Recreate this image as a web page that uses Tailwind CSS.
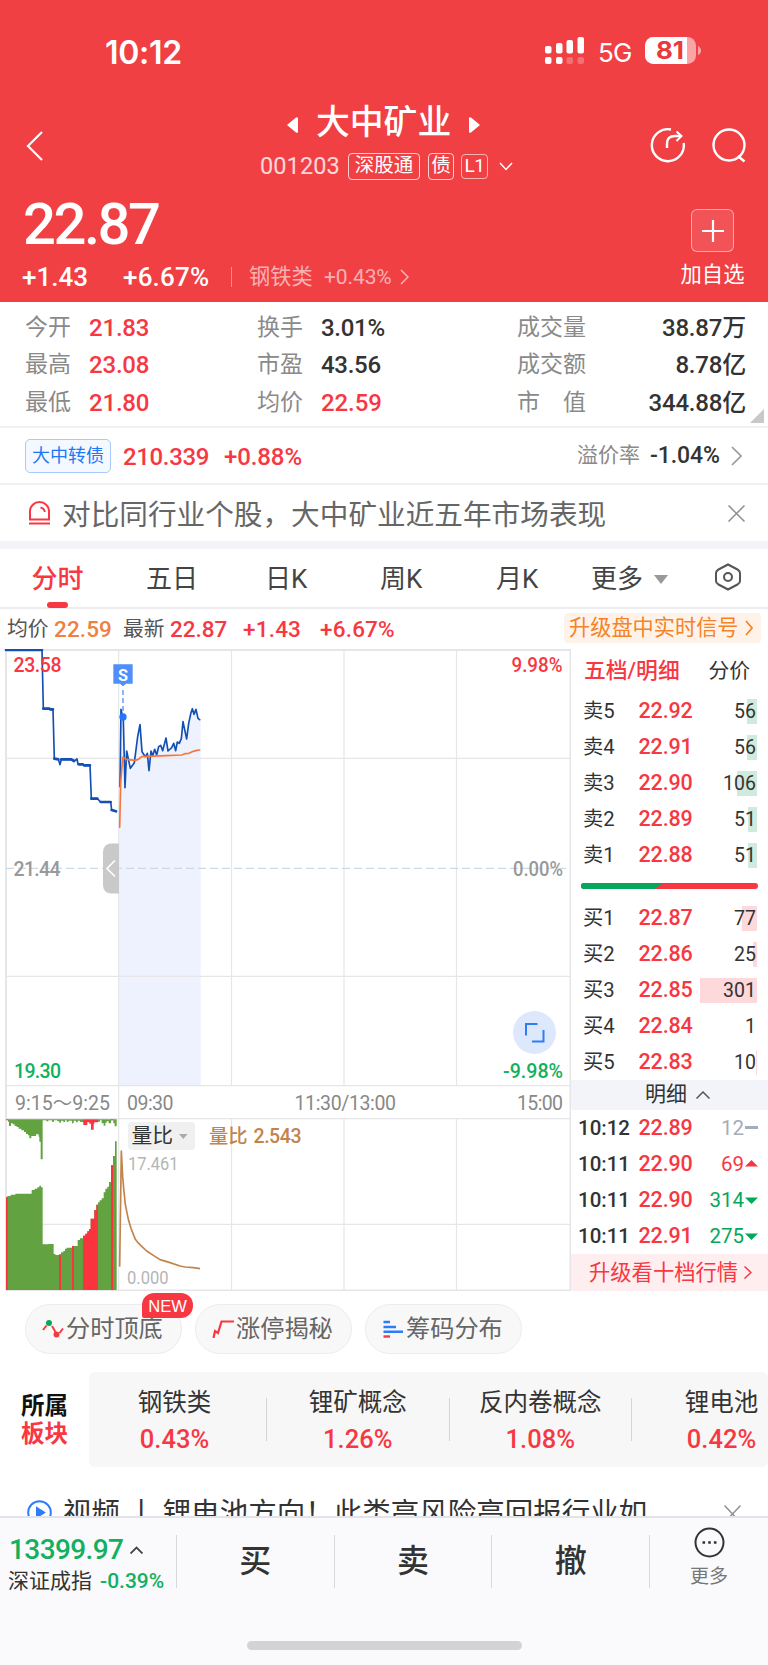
<!DOCTYPE html>
<html lang="zh-CN">
<head>
<meta charset="utf-8">
<title>大中矿业 001203</title>
<script src="https://cdn.jsdelivr.net/npm/@tailwindcss/browser@4"></script>
</head>
<body class="w-[768px] h-[1665px] overflow-hidden bg-white font-[Roboto,'Noto_Sans_CJK_SC',sans-serif] text-[#333] whitespace-nowrap">
<div class="flex flex-col h-[1665px] overflow-hidden">

<!-- header -->
<header class="h-[302px] shrink-0 bg-[#f04043] text-white flex flex-col">
  <div class="h-[105px] flex items-center pl-[105px] pr-[67px] justify-between">
    <span class="font-[Inter,sans-serif] font-semibold text-[32px] tracking-[-0.300px] leading-none">10:12</span>
    <div class="flex items-center -mt-1">
      <svg width="39" height="27" viewBox="0 0 39 27" fill="#fff"><rect x="0" y="9" width="6.5" height="7.500" rx="2"/><rect x="11" y="6" width="6.500" height="10.500" rx="2"/><rect x="21.500" y="3" width="6.500" height="13.500" rx="2"/><rect x="32.500" y="0" width="6.500" height="16.500" rx="2"/><rect x="0" y="20" width="6.500" height="7" rx="2"/><rect x="11" y="20" width="6.500" height="7" rx="2"/><rect x="21.500" y="20" width="6.500" height="7" rx="2" opacity=".25"/><rect x="32.500" y="20" width="6.500" height="7" rx="2" opacity=".25"/></svg>
      <span class="ml-3.5 w-[33px] font-[Inter,sans-serif] text-[26px] tracking-[-0.8px] leading-none mt-1">5G</span>
      <svg class="ml-3.5" width="56" height="27" viewBox="0 0 56 27"><rect width="51" height="27" rx="8.500" fill="#f9a4a6"/><path d="M8.500 0H42V27H8.500A8.500 8.500 0 0 1 0 18.500V8.500A8.500 8.500 0 0 1 8.500 0Z" fill="#fff"/><path d="M53 9q3 1.500 3 4.500t-3 4.500z" fill="#f9a4a6"/><text x="11" y="22.200" textLength="28" lengthAdjust="spacingAndGlyphs" font-family="Inter" font-weight="700" font-size="24" fill="#e8393d">81</text></svg>
    </div>
  </div>
  <div class="h-[82px] flex items-center pl-[26px] pr-[22px]">
    <svg class="w-[17px]" width="17" height="30" viewBox="0 0 17 30" fill="none" stroke="#fff" stroke-width="2.200"><path d="M16 1 2 15l14 14"/></svg>
    <div class="flex-1 pl-[208px] -mt-[5px] flex flex-col">
      <div class="flex items-center h-9 pl-9">
        <svg width="11" height="16" viewBox="0 0 11 16" fill="#fff"><path d="M0 8 9 .5q2-1 2 1v13q0 2-2 1z"/></svg>
        <span class="ml-[18px] -mt-1 w-[135px] text-[33.800px] leading-9 font-medium">大中矿业</span>
        <svg class="ml-[18px]" width="11" height="16" viewBox="0 0 11 16" fill="#fff"><path d="M11 8 2 .5Q0-.5 0 1.500v13q0 2 2 1z"/></svg>
      </div>
      <div class="flex items-center h-7 mt-2.5 pl-[9px]">
        <span class="w-[88px] text-[23.500px] tracking-[0.100px] text-white/80">001203</span>
        <span class="w-[72px] h-[27px] border border-white/75 rounded-[4px] flex items-center justify-center text-[19.500px] leading-none pb-0.5">深股通</span>
        <span class="ml-2 w-[26px] h-[27px] border border-white/75 rounded-[4px] flex items-center justify-center text-[19.500px] leading-none pb-0.5">债</span>
        <span class="ml-[7px] w-[27px] h-[25px] border border-white/60 rounded-[4px] flex items-center justify-center text-[19px] leading-none tracking-tight pb-0.5">L1</span>
        <svg class="ml-[11px]" width="14" height="9" viewBox="0 0 14 9" fill="none" stroke="#fff" stroke-width="1.500"><path d="m1 1 6 6.500L13 1"/></svg>
      </div>
    </div>
    <svg class="-mt-0.5" width="36" height="36" viewBox="0 0 36 36" fill="none" stroke="#fff" stroke-width="2.400"><path d="M21 2.500A16 16 0 1 0 33.700 16"/><path d="M17 21v-4q0-8 8-8h6"/><path d="M26.500 4.500 31.500 9l-5 5" stroke-width="2"/></svg>
    <svg class="ml-[26px] -mt-0.5" width="34" height="36" viewBox="0 0 34 36" fill="none" stroke="#fff" stroke-width="2.400"><circle cx="17" cy="18" r="15.500"/><path d="m26 29 6.500 5.500"/></svg>
  </div>
  <div class="h-[115px] flex justify-between pl-[23px] pr-6">
    <div class="flex flex-col">
      <div class="h-[72px] text-[58px] leading-[74px] font-medium tracking-[-2.500px]">22.87</div>
      <div class="h-5 mt-[8px] flex items-center text-[26px] leading-5 font-medium -ml-px">
        <span class="w-[101px]">+1.43</span><span class="w-[108px] tracking-[0.200px]">+6.67%</span><i class="w-px h-5 bg-white/40"></i>
        <span class="ml-[17px] w-[75px] text-[21.200px] font-normal text-white/60">钢铁类</span><span class="w-[76px] text-[21px] font-normal text-white/60 tracking-[-0.100px]">+0.43%</span>
        <svg width="9" height="16" viewBox="0 0 9 16" fill="none" stroke="#fff" stroke-opacity=".6" stroke-width="1.500"><path d="m1 1 7 7-7 7"/></svg>
      </div>
    </div>
    <div class="flex flex-col items-center w-[63px]">
      <div class="mt-[22px] w-[43px] h-[43px] rounded-[6px] border border-white/50 bg-white/10 flex items-center justify-center"><svg width="22" height="22" stroke="#fff" stroke-width="2.200"><path d="M11 0v22M0 11h22"/></svg></div>
      <span class="mt-[11px] text-[21.300px] leading-6">加自选</span>
    </div>
  </div>
</header>

<!-- key figures -->
<section class="relative h-[126px] shrink-0 border-b-2 border-[#f1f1f3] pt-[7px] pl-[25px] pr-[22px] flex flex-col text-[24px] font-medium">
  <div class="h-[37.500px] flex items-center"><span class="w-16 text-[23px] font-normal text-[#8a8a8a]">今开</span><span class="w-[168px] text-[#f73843] tracking-[-0.200px]">21.83</span><span class="w-[64px] text-[23px] font-normal text-[#8a8a8a]">换手</span><span class="w-[196px] tracking-[-0.300px]">3.01%</span><span class="text-[23px] font-normal text-[#8a8a8a]">成交量</span><span class="flex-1 text-right tracking-[-0.200px]">38.87万</span></div>
  <div class="h-[37.500px] flex items-center"><span class="w-16 text-[23px] font-normal text-[#8a8a8a]">最高</span><span class="w-[168px] text-[#f73843] tracking-[-0.200px]">23.08</span><span class="w-[64px] text-[23px] font-normal text-[#8a8a8a]">市盈</span><span class="w-[196px] tracking-[-0.300px]">43.56</span><span class="text-[23px] font-normal text-[#8a8a8a]">成交额</span><span class="flex-1 text-right tracking-[-0.200px]">8.78亿</span></div>
  <div class="h-[37.500px] flex items-center"><span class="w-16 text-[23px] font-normal text-[#8a8a8a]">最低</span><span class="w-[168px] text-[#f73843] tracking-[-0.200px]">21.80</span><span class="w-[64px] text-[23px] font-normal text-[#8a8a8a]">均价</span><span class="w-[196px] text-[#f73843] tracking-[-0.100px]">22.59</span><span class="text-[23px] font-normal text-[#8a8a8a]">市　值</span><span class="flex-1 text-right tracking-[-0.200px]">344.88亿</span></div>
  <svg class="absolute right-1 bottom-[3px]" width="14" height="14" fill="#c8c8c8"><path d="M14 0v14H0z"/></svg>
</section>

<!-- convertible bond -->
<section class="h-[57px] shrink-0 border-b-2 border-[#f1f1f3] pl-[25px] pr-[26px] pt-px flex items-center text-[24px] font-medium">
  <span class="w-[86px] h-[34px] rounded-[5px] border border-[#a9c8fb] bg-[#f4f8ff] text-[#2177f5] text-[18px] font-normal flex items-center justify-center pb-0.5">大中转债</span>
  <span class="ml-3 mt-0.5 w-[101px] text-[#f73843] tracking-[-0.350px]">210.339</span><span class="mt-0.5 text-[#f73843] tracking-[-0.100px]">+0.88%</span>
  <span class="ml-auto text-[21px] font-normal text-[#8a8a8a]">溢价率</span><span class="ml-2.5 w-[81px] text-[23px] tracking-[-0.100px]">-1.04%</span>
  <svg width="11" height="20" viewBox="0 0 11 20" fill="none" stroke="#999" stroke-width="1.700"><path d="m1 1 9 9-9 9"/></svg>
</section>

<!-- notice -->
<section class="h-[56px] shrink-0 pl-[28px] pr-[23px] flex items-center">
  <svg width="23" height="24" viewBox="0 0 23 24" fill="none" stroke="#f73843" stroke-width="2"><path d="M2 18.500V10.500a9.500 9.500 0 0 1 19 0v8zM1 22.500h21"/><path d="M12.500 6.500q4 .8 4.300 4.500"/></svg>
  <span class="ml-[11px] pt-1 text-[28.650px] text-[#666]">对比同行业个股，大中矿业近五年市场表现</span>
  <svg class="ml-auto" width="17" height="17" stroke="#8f8f8f" stroke-width="1.500"><path d="m.5.5 16 16m0-16-16 16"/></svg>
</section>
<div class="h-2 shrink-0 bg-[#f3f4f9]"></div>

<!-- period tabs -->
<nav class="h-[60px] shrink-0 border-b-2 border-[#ededf0] pl-8 pr-[27px] flex text-[26px] leading-[60px] text-[#444]">
  <div class="w-[114px]"><div class="w-[51px] text-[#f73843] font-medium flex flex-col items-center"><span class="h-[53px]">分时</span><i class="w-[21px] h-[5.500px] rounded-full bg-[#f73843]"></i></div></div>
  <span class="w-[119px]">五日</span><span class="w-[115px]">日K</span><span class="w-[116px]">周K</span><span class="w-[95px]">月K</span><span class="w-[63px]">更多</span>
  <svg class="mt-[26px]" width="14" height="9" fill="#999"><path d="M0 0h14L7 9z"/></svg>
  <svg class="ml-auto mt-[14px]" width="26" height="28" viewBox="0 0 26 28" fill="none" stroke="#555" stroke-width="2"><path d="m13 1.500 9.500 5Q25 7.800 25 10v8q0 2.200-2.500 3.500l-9.500 5-9.500-5Q1 20.200 1 18v-8q0-2.200 2.500-3.500z"/><circle cx="13" cy="14" r="4"/></svg>
</nav>

<!-- live quote line -->
<div class="h-[40px] shrink-0 pl-[7px] pr-[7px] pt-0.5 flex items-center text-[22.500px] font-medium">
  <span class="w-[47px] text-[20.800px] font-normal text-[#555]">均价</span><span class="w-[69px] text-[#ee8140] tracking-[0.100px]">22.59</span>
  <span class="w-[47px] text-[20.800px] font-normal text-[#555]">最新</span><span class="w-[73px] text-[#f73843]">22.87</span><span class="w-[77px] text-[#f73843] tracking-[0.200px]">+1.43</span><span class="text-[#f73843] tracking-[0.200px]">+6.67%</span>
  <div class="ml-auto -mt-1 w-[197px] h-[30px] rounded-[4px] bg-[#fef2e9] text-[#f58327] text-[21.200px] font-normal flex items-center pl-[5px] pr-2 justify-between">升级盘中实时信号<svg width="8" height="16" viewBox="0 0 8 16" fill="none" stroke="#f58327" stroke-width="1.700"><path d="m1 1 6 7-6 7"/></svg></div>
</div>

<!-- charts + order book -->
<section class="h-[642px] shrink-0 flex">
  <svg class="w-[571px] h-[642px] shrink-0" viewBox="0 649 571 642" font-family="Roboto, 'Noto Sans CJK SC', sans-serif" font-size="19.500">
    <g transform="translate(0 640) scale(.33333)"><path fill="#eef2fe" d="M357 1337V560L363 208L370 240L375 443L380 333L391 385L403 368L413 290L420 254L426 335L436 350L442 340L447 392L453 333L464 328L482 316L488 332L498 294L504 333L521 310L544 296L549 245L560 297L566 250L577 206L588 208L594 235L602 239V1337Z"/></g>
    <g stroke="#e6e6e9" stroke-width="1.200" fill="none"><path stroke-width="2" d="M6 650H571M6 649V1290M6 1290.500H571M570.500 649V1290"/><path d="M6 758.300H571M6 976.300H571M6 1085.600H571M6 1118.600H571M6 1224.300H571M118.700 649V1290M231.500 649V1085.600M344 649V1085.600M456.500 649V1085.600M231.500 1118.600V1290M344 1118.600V1290M456.500 1118.600V1290"/></g>
    <path stroke="#c9d9e6" stroke-width="1.300" stroke-dasharray="8 4" d="M6 868.300H570"/>
    <g transform="translate(0 640) scale(.33333)" fill="none" stroke="#1450b4" stroke-linejoin="round" stroke-linecap="round">
      <path stroke-width="5" d="M18 30H126L130 206H148L150 209H159L163 356L175 358L180 374L184 358H214L222 363L227 360L231 357L234 372H248L252 376H270L274 476H292L302 486H332L335 510L348 514"/>
      <path stroke-width="8" d="M18 30H126M130 206H148M152 208H159M163 356L175 358M184 358H214L222 363M236 373H248M252 376H270M274 476H292M302 486H332M335 510L348 514"/>
      <path stroke-width="5" d="M360 440L363 208L370 240L375 443L380 333L391 385L403 368L413 290L420 254L426 335L436 350L442 340L447 392L453 333L458 348L464 328L470 345L476 320L482 316L488 332L498 294L504 333L515 323L521 310L527 332L532 306L538 310L544 296L549 245L560 297L566 250L573 218L577 206L582 223L588 208L594 235L599 239"/>
      <path stroke="#f4783c" stroke-width="5" d="M359 562L362 430L368 352L378 358L405 361L415 358L425 350L440 349L500 347L545 345L555 341L567 340L580 334L590 331L599 330"/>
      <path stroke="#8db4fb" stroke-width="6" stroke-linecap="butt" stroke-dasharray="15 9" d="M369 150V222"/>
      <path stroke="none" fill="#4e8ffb" d="M340 73H398V131H378L369 139L360 131H340Z"/>
      <circle stroke="none" fill="#2477fb" cx="369" cy="231" r="11"/>
    </g>
    <text x="118" y="680.500" textLength="10" lengthAdjust="spacingAndGlyphs" font-size="17" font-weight="700" fill="#fff">S</text>
    <path fill="#c9c9c9" d="M119 843.500H111a8 8 0 0 0-8 8V885.500a8 8 0 0 0 8 8H119Z"/><path d="m115 860.500-8 8 8 8" fill="none" stroke="#fff" stroke-width="1.700"/>
    <g font-weight="500">
      <text x="13.500" y="672" textLength="48" fill="#f73843">23.58</text>
      <text x="13.500" y="875.500" textLength="47" fill="#999" >21.44</text>
      <text x="14" y="1077.500" textLength="47" fill="#12b05f">19.30</text>
      <text x="511.500" y="672" textLength="51" lengthAdjust="spacingAndGlyphs" fill="#f73843">9.98%</text>
      <text x="513" y="875.500" textLength="50" lengthAdjust="spacingAndGlyphs" fill="#999">0.00%</text>
      <text x="503" y="1077.500" textLength="60" lengthAdjust="spacingAndGlyphs" fill="#12b05f">-9.98%</text>
    </g>
    <circle cx="534.500" cy="1032.500" r="21.500" fill="#dee8fd"/><path d="M526 1035.500V1024H537.500M543.500 1030V1041.500H532" fill="none" stroke="#2f7cf7" stroke-width="2"/>
    <g fill="#888">
      <text x="15" y="1110" textLength="95">9:15～9:25</text><text x="127" y="1110" textLength="46.500">09:30</text><text x="294.500" y="1110" textLength="101.500">11:30/13:00</text><text x="517" y="1110" textLength="46">15:00</text>
    </g>
    <g transform="translate(0 1060) scale(.33333)">
      <path fill="#62a241" d="M18 690V412H22V408H32V404H46V401H95V390H104V386H112V382H118V377H123V382H128V553H145V552H161V582H166V585H177V583H183V577H190V573H195V566H200V563H218V558H233V540H240V535H249V527H256V521H262V514H267V507H272V476H283V450H289V434H294V427H299V421H305V415H311V397H316V386H322V380H327V366H333V316H339V288H345V244H350V690Z"/>
      <path fill="#fa343e" d="M18 412H23V690H18ZM177 584H183V690H177ZM216 558H222V690H216ZM249 690V527H256V521H262V514H267V507H272V476H283V450H289V434H294V690ZM333 316H339V690H333ZM18 178H25V181H18ZM333 178H340V181H333Z"/>
      <path fill="#62a241" d="M24 178V185H27V198H33V190H38V193H44V198H50V201H56V206H64V211H72V216H78V222H84V226H88V235H94V228H108V223H116V230H118V245H122V298H128V181H139V184H145V181H156V185H162V181H172V184H178V188H183V182H190V186H195V181H200V186H205V182H216V190H221V182H228V187H233V182H240V186H249V178ZM294 178V185H300V181H305V190H311V197H316V188H320V184H326V190H333V181H340V190H344V199H350V178Z"/>
      <path fill="#fa343e" d="M249 178H294V187H283V191H281V209H273V191H268V187H262V195H250Z"/>
      <path fill="none" stroke="#c2844c" stroke-width="5" stroke-linejoin="round" d="M359 620L364 273L368 350L371 385L376 433L385 478L393 505L406 538L413 547L426 560L440 573L460 586L480 599L510 608L540 618L555 621L580 623L600 626"/>
    </g>
    <rect x="128" y="1122" width="67" height="28" rx="4" fill="#f0f0f0"/><text x="131.500" y="1142.500" font-size="20.800" fill="#333">量比</text><path d="M179 1134h8.500l-4.200 5z" fill="#aaa"/>
    <text x="209" y="1143" font-size="19.300" font-weight="500" fill="#c2844c">量比</text><text x="253.500" y="1143" font-size="19.500" textLength="48" font-weight="500" fill="#c2844c">2.543</text>
    <text x="128" y="1170" font-size="18.500" textLength="50.500" lengthAdjust="spacingAndGlyphs" fill="#b5b5b5">17.461</text><text x="127" y="1284" font-size="18.500" textLength="41.500" lengthAdjust="spacingAndGlyphs" fill="#b5b5b5">0.000</text>
  </svg>
  <aside class="flex-1 flex flex-col">
    <div class="h-[44.500px] shrink-0 pl-[13px] pr-[18px] flex items-center justify-between"><span class="text-[21.800px] text-[#f73843] font-medium">五档/明细</span><span class="text-[20.800px]">分价</span></div>
    <div id="asks" class="flex flex-col shrink-0"></div>
    <div class="h-[26.500px] shrink-0 pl-2.5 pt-[9.500px]"><svg width="177" height="6" viewBox="0 0 177 6"><rect width="177" height="6" rx="3" fill="#f73843"/><path d="M3 0H82L74 6H3A3 3 0 0 1 3 0Z" fill="#05a85b"/></svg></div>
    <div id="bids" class="flex flex-col shrink-0"></div>
    <div class="h-[30px] shrink-0 bg-[#f3f4f9] flex items-center justify-center pl-4 text-[21px] gap-[9px]">明细<svg width="14" height="8" viewBox="0 0 14 8" fill="none" stroke="#555" stroke-width="1.500"><path d="m.5 7.500 6.500-6.500 6.500 6.500"/></svg></div>
    <div id="ticks" class="flex flex-col shrink-0"></div>
    <div class="h-[37px] shrink-0 bg-[#feeeef] text-[#f73843] text-[21.300px] flex items-center pl-[18px]"><span class="w-[155px]">升级看十档行情</span><svg width="8" height="13" viewBox="0 0 8 13" fill="none" stroke="#f73843" stroke-width="1.500"><path d="m.5.5 6.500 6-6.500 6"/></svg></div>
  </aside>
</section>

<!-- tools -->
<section class="h-[81px] shrink-0 pt-[13px] pl-[25px] flex gap-[13px] text-[24.200px] text-[#666]">
  <div class="relative w-[157px] h-[50px] rounded-full border border-[#ececec] bg-[#f8f8f8] flex items-center pl-4">
    <svg width="22" height="18" viewBox="0 0 22 18" fill="none" stroke="#f73843" stroke-width="2"><path d="m1 10 3.500-4.500M10 6l3.500 6M17.500 13 21 8.500"/><circle cx="7" cy="3" r="3" fill="#05a85b" stroke="none"/><circle cx="14.500" cy="14.500" r="3" fill="#f73843" stroke="none"/></svg><span class="ml-0.5">分时顶底</span>
    <span class="absolute left-[116px] -top-3 w-[51px] h-[25px] rounded-[12px] rounded-bl-[2px] bg-[#f73843] text-white font-['Liberation_Sans'] text-[16.500px] leading-[26px] text-center">NEW</span>
  </div>
  <div class="w-[157px] h-[50px] rounded-full border border-[#ececec] bg-[#f8f8f8] flex items-center pl-4"><svg width="22" height="18" viewBox="0 0 22 18" fill="none" stroke="#f73843" stroke-width="2.200"><path d="M1.500 18 3 11l3 2L9.500 1.500H22"/></svg><span class="ml-0.5">涨停揭秘</span></div>
  <div class="w-[157px] h-[50px] rounded-full border border-[#ececec] bg-[#f8f8f8] flex items-center pl-[17px]"><svg width="20" height="18" viewBox="0 0 20 18" fill="none" stroke="#2f7cf7" stroke-width="2.400"><path d="M.5 2H7M.5 7H13M.5 11.800H20"/><path stroke="#f73843" d="M.5 16.500H7"/></svg><span class="ml-[3px]">筹码分布</span></div>
</section>

<!-- sectors -->
<section class="h-[95px] shrink-0 flex">
  <div class="w-[89px] pl-[21px] pt-[20px] text-[23.500px] leading-[28px] font-bold text-[#111]">所属<br><span class="text-[#f73843]">板块</span></div>
  <div class="flex-1 rounded-[6px] bg-[#f7f7f7] flex items-center overflow-hidden text-center text-[24.500px] leading-[37px]">
    <div class="w-[177px] pr-1.5 shrink-0 pt-0.5"><div>钢铁类</div><div class="text-[#f73843] font-medium text-[25.500px]">0.43%</div></div>
    <i class="w-px h-[43px] bg-[#d5d5d5] shrink-0"></i>
    <div class="w-[181.500px] shrink-0 pt-0.5"><div>锂矿概念</div><div class="text-[#f73843] font-medium text-[25.500px]">1.26%</div></div>
    <i class="w-px h-[43px] bg-[#d5d5d5] shrink-0"></i>
    <div class="w-[181.500px] shrink-0 pt-0.5"><div>反内卷概念</div><div class="text-[#f73843] font-medium text-[25.500px]">1.08%</div></div>
    <i class="w-px h-[43px] bg-[#d5d5d5] shrink-0"></i>
    <div class="w-[179px] shrink-0 pt-0.5"><div>锂电池</div><div class="text-[#f73843] font-medium text-[25.500px]">0.42%</div></div>
  </div>
</section>

<!-- video strip -->
<section class="h-[49px] shrink-0 overflow-hidden flex items-start pt-[27px] pl-[27px]">
  <svg class="mt-[6px] shrink-0" width="25" height="25" viewBox="0 0 25 25" fill="none" stroke="#2f7cf7" stroke-width="2"><circle cx="12.500" cy="12.500" r="11.300"/><path d="m10 8 7 4.500-7 4.500z" fill="#2f7cf7"/></svg>
  <span class="ml-[11px] w-[661px] text-[28.500px] leading-10">视频 丨 锂电池方向！此类高风险高回报行业如</span>
  <svg class="mt-[11px] shrink-0" width="17" height="18" stroke="#8f8f8f" stroke-width="1.500"><path d="m.5.5 16 17m0-17-16 17"/></svg>
</section>

<!-- trade bar -->
<footer class="h-[149px] shrink-0 bg-[#fafafc] border-t-2 border-[#e2e4e9] flex flex-col">
  <div class="h-[86px] flex items-center">
    <div class="w-[176px] pl-[9px] pt-[8px] flex flex-col">
      <div class="h-[34px] flex items-center"><span class="w-[121px] text-[28px] font-medium text-[#12b05f] tracking-[-0.600px]">13399.97</span><svg width="13" height="8" viewBox="0 0 13 8" fill="none" stroke="#444" stroke-width="1.800"><path d="m.5 7.500 6-6 6 6"/></svg></div>
      <div class="h-[30px] flex items-center text-[21px] -ml-px"><span class="w-[92px]">深证成指</span><span class="text-[#12b05f] font-medium">-0.39%</span></div>
    </div>
    <i class="w-px h-[53px] bg-[#d9d9dc]"></i><span class="flex-1 text-center text-[32px] font-medium">买</span>
    <i class="w-px h-[53px] bg-[#d9d9dc]"></i><span class="flex-1 text-center text-[32px] font-medium">卖</span>
    <i class="w-px h-[53px] bg-[#d9d9dc]"></i><span class="flex-1 text-center text-[32px] font-medium">撤</span>
    <i class="w-px h-[53px] bg-[#d9d9dc]"></i>
    <div class="w-[118px] -mt-[6px] flex flex-col items-center"><svg width="31" height="31" viewBox="0 0 31 31" fill="none" stroke="#333" stroke-width="2"><circle cx="15.500" cy="15.500" r="14"/><path d="M8.500 15.500h2.600m3.100 0h2.600m3.100 0h2.600" stroke-width="2.600"/></svg><span class="mt-[7px] text-[19px] leading-6 text-[#777]">更多</span></div>
  </div>
  <div class="mt-[37px] mx-auto w-[275px] h-[9px] rounded-full bg-[#d3d3d6]"></div>
</footer>
</div>

<script>
const level = (label, price, qty, bar, tone) => `<div class="h-9 flex items-center pl-[12px] pr-[11px]">
  <span class="w-[55.500px] text-[20.300px]">${label}</span><span class="text-[21.500px] font-medium text-[#f73843] tracking-[-0.150px]">${price}</span>
  <span class="flex-1 h-[25px] leading-[26px] pr-px text-right text-[19.500px]" style="background:linear-gradient(${tone},${tone}) right/${bar}px 100% no-repeat">${qty}</span></div>`;
const g = '#d0eadd', r = '#fdd9dc';
document.getElementById('asks').innerHTML = [['卖5','22.92',56,10.5],['卖4','22.91',56,10.5],['卖3','22.90',106,20],['卖2','22.89',51,9],['卖1','22.88',51,9]].map(a => level(...a, g)).join('');
document.getElementById('bids').innerHTML = [['买1','22.87',77,15],['买2','22.86',25,4.5],['买3','22.85',301,57],['买4','22.84',1,0],['买5','22.83',10,1.5]].map(a => level(...a, r)).join('');
const marks = {
  flat: ['text-[#a4adb8]', '<path d="M0 5h13v3H0z"/>'],
  up: ['text-[#f73843]', '<path d="M0 9.500 6.500 3 13 9.500z"/>'],
  down: ['text-[#05a85b]', '<path d="M0 4.500h13L6.500 11z"/>']
};
document.getElementById('ticks').innerHTML = [['10:12','22.89',12,'flat'],['10:11','22.90',69,'up'],['10:11','22.90',314,'down'],['10:11','22.91',275,'down']].map(([t, p, q, m]) => `<div class="h-9 flex items-center pl-[7px] pr-2.5 text-[21.500px]">
  <span class="w-[60.500px] font-medium text-[20.500px]">${t}</span><span class="font-medium text-[#f73843] tracking-[-0.150px]">${p}</span>
  <span class="flex-1 text-right text-[20.500px] ${marks[m][0]}">${q}</span><svg class="ml-px ${marks[m][0]}" width="13" height="14" fill="currentColor">${marks[m][1]}</svg></div>`).join('');
</script>
</body>
</html>
